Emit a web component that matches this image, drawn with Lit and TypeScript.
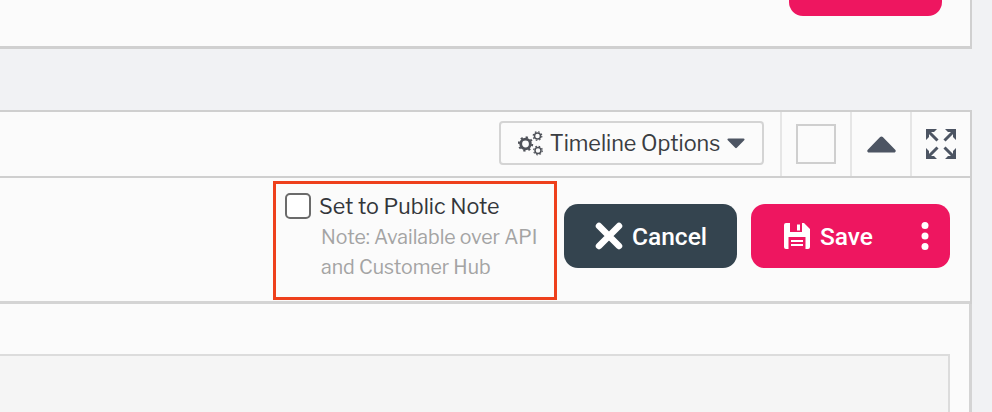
import { LitElement, css, html } from "lit";
import { customElement } from "lit/decorators.js";

@customElement("app-root")
export class AppRoot extends LitElement {
  static styles = css`
    :host {
      display: block;
      width: 992px;
      height: 412px;
      overflow: hidden;
      background: #f1f2f4;
      font-family: "Libre Franklin", "Open Sans", "Liberation Sans", sans-serif;
    }
    .top-card {
      box-sizing: border-box;
      width: 972px;
      height: 49px;
      background: #fbfbfb;
      border-right: 2px solid #d0d0d0;
      border-bottom: 3px solid #d0d0d0;
      display: flex;
      justify-content: flex-end;
      padding-right: 28px;
    }
    .top-btn {
      width: 153px;
      height: 16px;
      background: #ee1660;
      border-radius: 0 0 14px 14px;
    }
    .panel {
      box-sizing: border-box;
      width: 972px;
      margin-top: 61px;
      background: #fbfbfb;
      border-top: 2px solid #cfcfcf;
      border-right: 2px solid #cfcfcf;
    }
    .toolbar {
      box-sizing: border-box;
      height: 66px;
      display: flex;
      justify-content: flex-end;
      border-bottom: 2px solid #cfcfcf;
    }
    .timeline-wrap {
      display: flex;
      align-items: center;
      padding-right: 16px;
      border-right: 2px solid #e6e6e6;
    }
    .timeline {
      box-sizing: border-box;
      width: 265px;
      height: 44px;
      margin-bottom: 2px;
      display: flex;
      align-items: center;
      justify-content: center;
      gap: 7px;
      background: #fbfbfb;
      border: 2px solid #d4d4d4;
      border-radius: 4px;
      color: #3a3d42;
      font-size: 21.6px;
    }
    .cell {
      display: flex;
      align-items: center;
      justify-content: center;
      border-right: 2px solid #e6e6e6;
      box-sizing: border-box;
    }
    .cell.box { width: 70px; }
    .cell.up { width: 60px; }
    .cell.full { width: 58px; border-right: none; }
    .square {
      box-sizing: border-box;
      width: 40px;
      height: 40px;
      border: 2px solid #cfcfcf;
    }
    .actions {
      box-sizing: border-box;
      height: 126px;
      display: flex;
      align-items: flex-start;
      border-bottom: 3px solid #d4d4d4;
      padding: 3px 20px 0 273px;
    }
    .public {
      box-sizing: border-box;
      width: 284px;
      height: 119px;
      border: 3px solid #ee401c;
      padding: 7px 0 0 9px;
    }
    .check-row {
      display: flex;
      align-items: center;
      gap: 8px;
      font-size: 21.5px;
      line-height: 27px;
      color: #33363a;
    }
    .check-label { padding-top: 2px; }
    .check {
      box-sizing: border-box;
      width: 26px;
      height: 26px;
      border: 2px solid #6b6b6b;
      border-radius: 5px;
      background: #fff;
    }
    .note {
      margin: 2px 0 0 36px;
      font-size: 19.5px;
      line-height: 30px;
      color: #a4a4a4;
    }
    .btn {
      box-sizing: border-box;
      height: 64px;
      margin-top: 23px;
      border-radius: 14px;
      display: flex;
      align-items: center;
      color: #fff;
      font-family: Roboto, "Liberation Sans", sans-serif;
      font-size: 24.5px;
      font-weight: 500;
    }
    .cancel {
      width: 173px;
      margin-left: 7px;
      background: #34444f;
      padding-left: 31px;
      gap: 9px;
    }
    .save {
      width: 199px;
      margin-left: 14px;
      background: #ee1660;
      padding: 0 20px 0 33px;
      gap: 10px;
    }
    .save .label { flex: 1; }
    .body {
      box-sizing: border-box;
      width: 972px;
      height: 108px;
      background: #fbfbfb;
      padding: 50px 19px 0 0;
      border-right: 3px solid #d4d4d4;
    }
    .inner {
      height: 60px;
      background: #f5f5f5;
      border-top: 2px solid #dcdcdc;
      border-right: 2px solid #dcdcdc;
    }
  `;

  render() {
    return html`
      <div class="top-card"><div class="top-btn"></div></div>
      <section class="panel">
        <div class="toolbar">
          <div class="timeline-wrap">
            <div class="timeline">
              <svg width="25" height="25" viewBox="0 0 25 25" fill="none" stroke="#4f5259">
                <circle cx="7.500" cy="13" r="4.800" stroke-width="2.800" />
                <circle cx="7.500" cy="13" r="6.700" stroke-width="2" stroke-dasharray="2.200 3.060" />
                <circle cx="19.500" cy="5" r="3" stroke-width="1.500" />
                <circle cx="20" cy="19.500" r="3" stroke-width="1.500" />
                <circle cx="19.500" cy="5" r="4.300" stroke-width="1.200" stroke-dasharray="1.600 1.800" />
                <circle cx="20" cy="19.500" r="4.300" stroke-width="1.200" stroke-dasharray="1.600 1.800" />
              </svg>
              <span>Timeline Options</span>
              <svg width="18" height="11" viewBox="0 0 18 11">
                <path d="M1.500 0.500h15c1 0 1.400 1 .7 1.700L9.800 9.800c-.5.500-1.100.500-1.600 0L.8 2.200C.1 1.500.5.500 1.500.500z" fill="#4d5563" />
              </svg>
            </div>
          </div>
          <div class="cell box"><div class="square"></div></div>
          <div class="cell up">
            <svg width="29" height="17" viewBox="0 0 29 17">
              <path d="M2 16.500h25c1.600 0 2.300-1.600 1.200-2.700L15.800 1c-.8-.8-1.900-.8-2.700 0L.8 13.800C-.3 14.900.4 16.500 2 16.500z" fill="#4d5563" />
            </svg>
          </div>
          <div class="cell full">
            <svg width="30" height="30" viewBox="0 0 30 30" fill="#4d5563" stroke="#4d5563" stroke-width="3">
              <path stroke="none" d="M0 0h11L8 3H3v5L0 11z" />
              <path stroke="none" d="M30 0H19l3 3h5v5l3 3z" />
              <path stroke="none" d="M0 30h11l-3-3H3v-5l-3-3z" />
              <path stroke="none" d="M30 30H19l3-3h5v-5l3-3z" />
              <path d="M2.500 2.500l9 9M27.500 2.500l-9 9M2.500 27.500l9-9M27.500 27.500l-9-9" />
            </svg>
          </div>
        </div>
        <div class="actions">
          <div class="public">
            <label class="check-row"><span class="check"></span><span class="check-label">Set to Public Note</span></label>
            <div class="note">Note: Available over API<br />and Customer Hub</div>
          </div>
          <div class="btn cancel">
            <svg width="28" height="28" viewBox="0 0 28 28">
              <path d="M4 4l20 20M24 4L4 24" stroke="#fff" stroke-width="6.500" stroke-linecap="round" />
            </svg>
            <span>Cancel</span>
          </div>
          <div class="btn save">
            <svg width="26" height="26" viewBox="0 0 26 26">
              <path fill="#fff" fill-rule="evenodd" d="M2 0H20l6 6v18a2 2 0 0 1-2 2H2a2 2 0 0 1-2-2V2a2 2 0 0 1 2-2zM6 0V9H18V0zM4.500 14v12h17V14zM7 17h12v2H7zM7 21h12v2H7z" />
              <path fill="#fff" d="M13 1.500h3v6h-3z" />
            </svg>
            <span class="label">Save</span>
            <svg width="10" height="30" viewBox="0 0 10 30" fill="#fff">
              <circle cx="5" cy="4.500" r="3.500" />
              <circle cx="5" cy="15" r="3.500" />
              <circle cx="5" cy="25.500" r="3.500" />
            </svg>
          </div>
        </div>
      </section>
      <div class="body"><div class="inner"></div></div>
    `;
  }
}
